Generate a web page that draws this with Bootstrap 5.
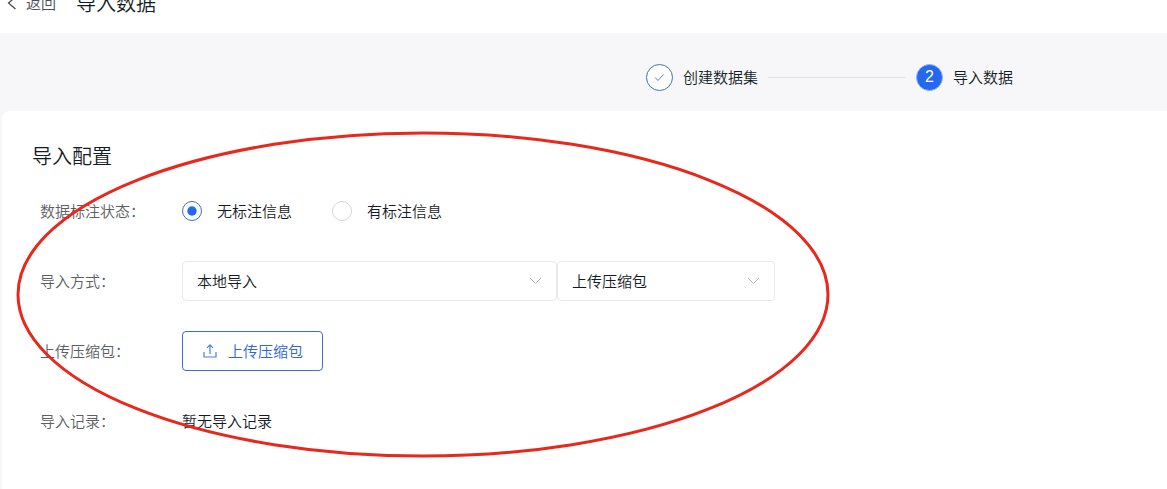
<!DOCTYPE html>
<html lang="zh-CN">
<head>
<meta charset="utf-8">
<meta name="viewport" content="width=device-width, initial-scale=1">
<title>导入数据</title>
<link rel="stylesheet" href="https://cdn.jsdelivr.net/npm/bootstrap@5.3.0/dist/css/bootstrap.min.css">
<style>
  :root { --brand: #2468f2; --brand-line: #3b6fc9; --ink: #151b26; --muted: #5c5f66; --rule: #e8e9eb; }
  body { background: #f7f7f9; color: var(--ink); font-family: "Noto Sans CJK SC", "Liberation Sans", sans-serif; font-size: 15px; line-height: 24px; font-weight: 350; }
  /* the header is partly scrolled out of view */
  .page-head { height: 60px; margin-top: -27px; padding-left: 6px; }
  .page-title, .panel-title { font-size: 20px; line-height: 30px; font-weight: 350; margin: 0; }
  .back-link { color: #4a4d55; gap: 8px; }
  .steps { height: 78px; padding: 10px 154px 0 0; }
  .step-item { gap: 10px; }
  .step-dot { width: 27px; height: 27px; border: 1px solid var(--brand-line); background: #fff; }
  .step-now { background: var(--brand); border-color: #8fb2f8; color: #fff; font-family: "Liberation Sans", sans-serif; font-size: 16px; }
  .step-line { width: 138px; height: 1px; background: #e3e4e8; margin: 0 10px; }
  .panel { background: #fff; margin-left: 2px; border-radius: 8px 0 0 0; padding: 30px; }
  .form-lines { gap: 30px; margin-top: 20px; }
  .form-line { min-height: 40px; padding-left: 8px; }
  .line-name { width: 142px; color: var(--muted); flex: none; }
  .radio-text { padding-left: 15px; }
  .panel .form-check-input { width: 20px; height: 20px; margin: 0; border: 1px solid #d4d6d9; box-shadow: none; background-size: contain; }
  .panel .form-check-input:checked { background-color: #fff; border-color: var(--brand-line); background-image: url("data:image/svg+xml,%3csvg xmlns='http://www.w3.org/2000/svg' viewBox='0 0 18 18'%3e%3ccircle cx='9' cy='9' r='4.7' fill='%232468f2'/%3e%3c/svg%3e"); }
  .picks { max-width: 593px; }
  .picks .form-select { height: 40px; border: 1px solid var(--rule); border-radius: 4px; padding: 0 40px 0 14px; font-size: 15px; color: var(--ink); font-weight: 350; background-position: right 14px center; background-size: 13px 8px; background-image: url("data:image/svg+xml,%3csvg xmlns='http://www.w3.org/2000/svg' viewBox='0 0 13 8'%3e%3cpath d='M1 1l5.5 5.5L12 1' fill='none' stroke='%23b8babf'/%3e%3c/svg%3e"); }
  .pick-source { flex: 0 1 375px; }
  .pick-kind { flex: 0 1 218px; }
  .btn-upload { height: 40px; padding: 0 19px; gap: 10px; font-size: 15px; font-weight: 350; border: 1px solid var(--brand-line); border-radius: 4px; color: #2f66cf; background: #fff; }
  .red-ring { left: 14px; top: 20px; pointer-events: none; }
</style>
</head>
<body class="d-flex flex-column min-vh-100">
<header class="page-head bg-white d-flex align-items-center flex-shrink-0">
  <a href="#" class="back-link d-flex align-items-center text-decoration-none">
    <svg width="12" height="14" viewBox="0 0 12 14" fill="none" stroke="currentColor" stroke-width="1.3"><path d="M9.500 1L2.500 7l7 6"/></svg>
    返回
  </a>
  <h1 class="page-title ms-3 ps-1">导入数据</h1>
</header>
<nav class="steps d-flex align-items-center justify-content-end flex-shrink-0" aria-label="步骤">
  <div class="step-item d-flex align-items-center">
    <span class="step-dot rounded-circle d-flex align-items-center justify-content-center">
      <svg width="11" height="9" viewBox="0 0 11 9" fill="none" stroke="#4b7fe0"><path d="M1 4.500l3 3L9.500 1.500"/></svg>
    </span>
    <span>创建数据集</span>
  </div>
  <div class="step-line"></div>
  <div class="step-item d-flex align-items-center">
    <span class="step-dot step-now rounded-circle d-flex align-items-center justify-content-center">2</span>
    <span>导入数据</span>
  </div>
</nav>
<main class="panel position-relative flex-grow-1">
  <h2 class="panel-title">导入配置</h2>
  <form class="form-lines d-flex flex-column">
    <div class="form-line d-flex align-items-center" role="radiogroup" aria-labelledby="state">
      <span class="line-name" id="state">数据标注状态：</span>
      <div class="d-flex align-items-center me-4 pe-3">
        <input class="form-check-input" type="radio" name="labelled" id="plain" checked>
        <label class="radio-text" for="plain">无标注信息</label>
      </div>
      <div class="d-flex align-items-center">
        <input class="form-check-input" type="radio" name="labelled" id="tagged">
        <label class="radio-text" for="tagged">有标注信息</label>
      </div>
    </div>
    <div class="form-line d-flex align-items-center">
      <label class="line-name" for="source">导入方式：</label>
      <div class="picks d-flex flex-grow-1">
        <select class="form-select pick-source" id="source"><option>本地导入</option></select>
        <select class="form-select pick-kind" aria-label="文件类型"><option>上传压缩包</option></select>
      </div>
    </div>
    <div class="form-line d-flex align-items-center">
      <label class="line-name" for="upload">上传压缩包：</label>
      <button class="btn btn-upload d-flex align-items-center" type="button" id="upload">
        <svg width="16" height="16" viewBox="0 0 16 16" fill="none" stroke="#4b7fe0" stroke-width="1.2"><path d="M2 9v5h12V9M8 11V2M5 4.800L8 1.800l3 3"/></svg>
        上传压缩包
      </button>
    </div>
    <div class="form-line d-flex align-items-center">
      <span class="line-name">导入记录：</span>
      <span>暂无导入记录</span>
    </div>
  </form>
  <svg class="red-ring position-absolute" width="814" height="328" viewBox="0 0 814 328" fill="none" aria-hidden="true">
    <ellipse cx="407" cy="163.5" rx="405" ry="161.5" stroke="#e8281c" stroke-width="3"/>
  </svg>
</main>
<script src="https://cdn.jsdelivr.net/npm/bootstrap@5.3.0/dist/js/bootstrap.bundle.min.js"></script>
</body>
</html>
